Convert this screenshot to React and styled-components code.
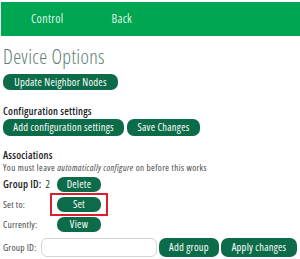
import React from "react"
import styled, { createGlobalStyle } from "styled-components"

const GlobalStyle = createGlobalStyle`
  html, body {
    margin: 0;
    padding: 0;
    background: #ffffff;
  }
  body {
    font-family: "Open Sans", "DejaVu Sans", sans-serif;
    font-stretch: 75%;
    color: #222222;
  }
  * {
    box-sizing: border-box;
  }
`

const Page = styled.div`
  width: 300px;
  height: 259px;
  overflow: hidden;
  padding-top: 2px;
`

const NavBar = styled.nav`
  height: 34px;
  margin-left: 1px;
  background: #00a651;
  display: flex;
  align-items: center;
  padding-left: 30px;
  gap: 48px;
`

const NavItem = styled.span`
  color: #dff3e7;
  font-size: 12px;
  letter-spacing: 0.3px;
  line-height: 1;
`

const Content = styled.main`
  padding: 0 3px;
`

const Title = styled.h1`
  margin: 9px 0 0;
  font-size: 20px;
  line-height: 24px;
  font-weight: 300;
  letter-spacing: 0.35px;
  color: #5e7c72;
`

const SectionLabel = styled.h3`
  margin: ${(p) => p.$top || 0}px 0 0;
  font-size: 10.5px;
  line-height: 14px;
  font-weight: 600;
  letter-spacing: 0.2px;
  color: #1c1c1c;
`

const Button = styled.button`
  height: ${(p) => p.$h || 17}px;
  padding: 0 ${(p) => p.$px || 6}px;
  min-width: ${(p) => p.$w || 0}px;
  border: none;
  border-radius: 7px;
  background: #0c6b48;
  color: #ffffff;
  font-family: inherit;
  font-stretch: 75%;
  font-size: 10.5px;
  letter-spacing: 0.25px;
  line-height: 1;
  cursor: pointer;
  white-space: nowrap;
`

const ButtonRow = styled.div`
  display: flex;
  gap: 3px;
  margin-top: ${(p) => p.$top || 0}px;
`

const Note = styled.p`
  margin: 0;
  font-size: 9px;
  line-height: 12px;
  letter-spacing: 0.4px;
  color: #444444;

  em {
    font-style: italic;
  }
`

const AssocRow = styled.div`
  display: flex;
  align-items: center;
  height: 20px;
`

const RowLabel = styled.div`
  width: 54px;
  flex: none;
  font-size: ${(p) => (p.$bold ? 10.5 : 9.5)}px;
  font-weight: ${(p) => (p.$bold ? 600 : 400)};
  letter-spacing: 0.2px;
  color: ${(p) => (p.$bold ? "#1c1c1c" : "#444444")};

  span {
    font-weight: 400;
    margin-left: 4px;
    color: #333333;
  }
`

const Highlight = styled.div`
  margin: -4px -7px;
  padding: 2px 5px;
  border: 2px solid #d6212d;
  display: flex;
`

const AddRow = styled.div`
  display: flex;
  align-items: center;
  margin-top: 4px;
  gap: 2px;
`

const AddLabel = styled.label`
  width: 37px;
  font-size: 9.5px;
  letter-spacing: 0.2px;
  color: #444444;
`

const TextInput = styled.input`
  width: 116px;
  height: 19px;
  border: 1px solid #d4d4d4;
  border-radius: 6px;
  padding: 0 4px;
  font-family: inherit;
  font-size: 10px;
  outline: none;
`

export default function App() {
  return (
    <Page>
      <GlobalStyle />
      <NavBar>
        <NavItem>Control</NavItem>
        <NavItem>Back</NavItem>
      </NavBar>
      <Content>
        <Title>Device Options</Title>
        <ButtonRow $top={5}>
          <Button $h={16} $w={115}>Update Neighbor Nodes</Button>
        </ButtonRow>

        <SectionLabel $top={14}>Configuration settings</SectionLabel>
        <ButtonRow $top={1}>
          <Button $w={121}>Add configuration settings</Button>
          <Button $w={73}>Save Changes</Button>
        </ButtonRow>

        <SectionLabel $top={12}>Associations</SectionLabel>
        <Note>
          You must leave <em>automatically configure</em> on before this works
        </Note>

        <AssocRow>
          <RowLabel $bold>
            Group ID:<span>2</span>
          </RowLabel>
          <Button $h={15} $w={44}>Delete</Button>
        </AssocRow>
        <AssocRow>
          <RowLabel>Set to:</RowLabel>
          <Highlight>
            <Button $h={15} $w={44}>Set</Button>
          </Highlight>
        </AssocRow>
        <AssocRow>
          <RowLabel>Currently:</RowLabel>
          <Button $h={15} $w={44}>View</Button>
        </AssocRow>

        <AddRow>
          <AddLabel>Group ID:</AddLabel>
          <TextInput type="text" />
          <Button $h={19} $w={60}>Add group</Button>
          <Button $h={19} $w={76}>Apply changes</Button>
        </AddRow>
      </Content>
    </Page>
  )
}
